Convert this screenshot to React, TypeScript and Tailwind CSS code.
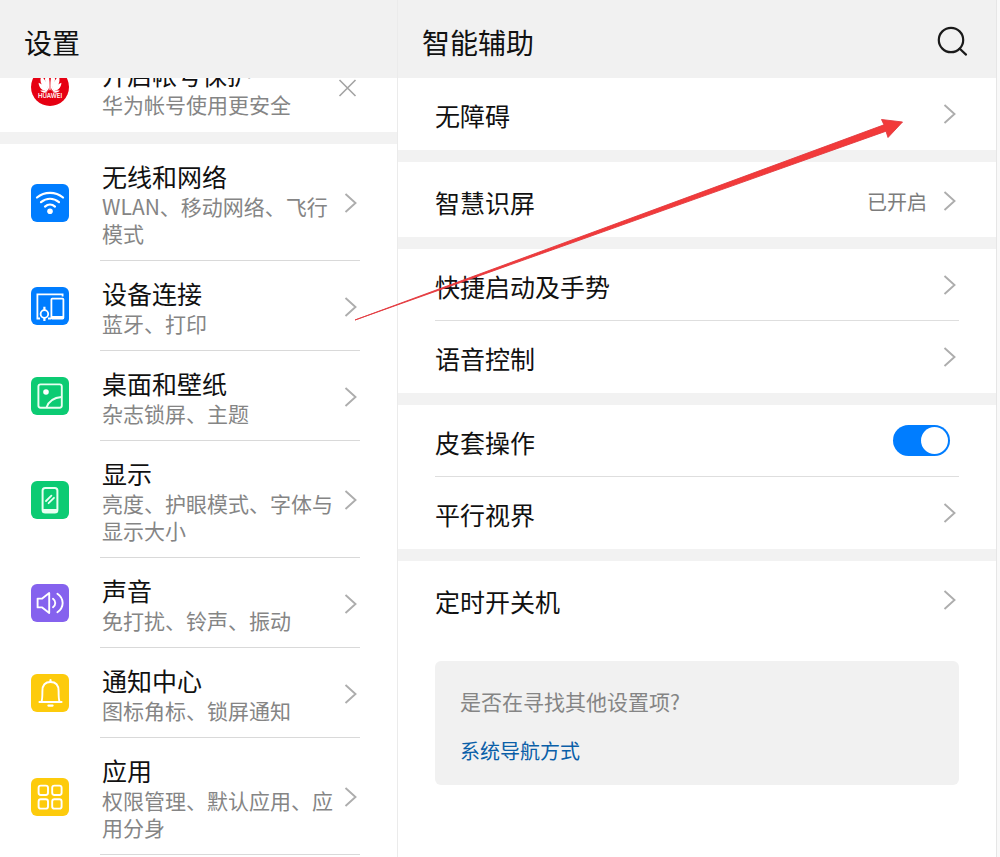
import { useState } from "react";
import type { ReactNode } from "react";

interface MenuItem {
  id: string;
  title: string;
  desc: string;
  color: string;
  icon: ReactNode;
}

// --- Icons (38x38 tiles) ---
const WifiIcon = (
  <g fill="none" stroke="#fff" strokeWidth="2.2" strokeLinecap="round">
    <path d="M6 13.5C13.5 7.2 24.5 7.2 32 13.5" />
    <path d="M10 18.2C15.5 13.6 22.5 13.6 28 18.2" />
    <path d="M14 22.6C17 20 21 20 24 22.6" />
    <circle cx="19" cy="27.2" r="2.8" fill="#fff" stroke="none" />
  </g>
);

const DevicesIcon = (
  <g fill="none" stroke="#fff" strokeWidth="1.8">
    <path d="M9 31.5H6.4V7.4H31.6V9.6" />
    <path d="M17 31.5H20" />
    <rect x="20.4" y="11.6" width="12" height="20" rx="0.8" />
    <path d="M20.4 30.6H32.4" strokeWidth="3" />
    <circle cx="13.4" cy="27" r="3.8" />
    <path d="M13.4 19.8V23M13.4 31V34" strokeWidth="2.2" />
  </g>
);

const WallpaperIcon = (
  <g fill="none" stroke="#e9fff2" strokeWidth="1.9">
    <rect x="7.4" y="7.4" width="23.4" height="23.4" rx="2.2" />
    <path d="M15.5 30.5C17.5 24.6 23 20.6 30.5 20" />
    <circle cx="15" cy="15" r="2.8" fill="#fff" stroke="none" />
  </g>
);

const DisplayIcon = (
  <g fill="none" stroke="#e9fff2" strokeWidth="2">
    <rect x="11.6" y="7" width="14.8" height="24.6" rx="2.6" />
    <path d="M11.8 29.6H26.2" strokeWidth="3.4" />
    <path d="M15 20L20.4 14.6M17.6 22.2L23 16.8" strokeWidth="1.8" strokeLinecap="round" />
  </g>
);

const SoundIcon = (
  <g fill="none" stroke="#fff" strokeWidth="1.9" strokeLinecap="round" strokeLinejoin="round">
    <path d="M6.6 14.6H11.2L18.2 9V29L11.2 23.4H6.6Z" />
    <path d="M22 14.8C25 17 25 21 22 23.2" />
    <path d="M26.4 9.8C33.4 14.6 33.4 23.4 26.4 28.2" />
  </g>
);

const BellIcon = (
  <g fill="none" stroke="#fff" strokeWidth="1.9" strokeLinecap="round" strokeLinejoin="round">
    <path d="M8.4 28H30.6" />
    <path d="M10.4 27.8C11.2 26.4 11.4 25 11.4 17C11.4 11.4 14.4 8 19.5 8C24.6 8 27.6 11.4 27.6 17C27.6 25 27.8 26.4 28.6 27.8" />
    <path d="M19.5 6.2V7.8M17.4 31.6H21.6" strokeWidth="2.2" />
  </g>
);

const AppsIcon = (
  <g fill="none" stroke="#fff" strokeWidth="1.9">
    <rect x="7.6" y="7.6" width="9.4" height="9.4" rx="2.2" />
    <rect x="21.2" y="7.6" width="9.4" height="9.4" rx="2.2" />
    <rect x="7.6" y="21.2" width="9.4" height="9.4" rx="2.2" />
    <rect x="21.2" y="21.2" width="9.4" height="9.4" rx="2.2" />
  </g>
);
// ---------------------------

const menuItems: MenuItem[] = [
  { id: "network", title: "无线和网络", desc: "WLAN、移动网络、飞行模式", color: "bg-[#007dff]", icon: WifiIcon },
  { id: "devices", title: "设备连接", desc: "蓝牙、打印", color: "bg-[#007dff]", icon: DevicesIcon },
  { id: "wallpaper", title: "桌面和壁纸", desc: "杂志锁屏、主题", color: "bg-[#0ccb73]", icon: WallpaperIcon },
  { id: "display", title: "显示", desc: "亮度、护眼模式、字体与显示大小", color: "bg-[#0ccb73]", icon: DisplayIcon },
  { id: "sound", title: "声音", desc: "免打扰、铃声、振动", color: "bg-[#8562ee]", icon: SoundIcon },
  { id: "notifications", title: "通知中心", desc: "图标角标、锁屏通知", color: "bg-[#fdcb0c]", icon: BellIcon },
  { id: "apps", title: "应用", desc: "权限管理、默认应用、应用分身", color: "bg-[#fdcb0c]", icon: AppsIcon },
];

function Chevron() {
  return (
    <svg className="h-6 w-6 shrink-0" viewBox="0 0 24 24" fill="none" stroke="#adadad" strokeWidth="1.9" aria-hidden="true">
      <path d="M9.5 3L19.5 12L9.5 21" />
    </svg>
  );
}

function HuaweiLogo() {
  return (
    <svg className="h-[38px] w-[38px] shrink-0" viewBox="0 0 38 38" role="img" aria-label="HUAWEI">
      <circle cx="19" cy="19" r="19" fill="#e60012" />
      <g fill="#fff">
        <path d="M18.5 22.4C13.6 16 12.4 9 16.6 5C18.6 9 18.9 16 18.5 22.4Z" />
        <path d="M19.5 22.4C24.4 16 25.6 9 21.4 5C19.4 9 19.1 16 19.5 22.4Z" />
        <path d="M17.4 22.8C10.6 19.4 8 13.4 10.4 8C14.2 11.6 17 16.8 17.4 22.8Z" />
        <path d="M20.6 22.8C27.4 19.4 30 13.4 27.6 8C23.8 11.6 21 16.8 20.6 22.8Z" />
        <path d="M16.6 23.3C11 23.2 7.8 19.6 7.6 14.8C12 16.4 15.4 19.4 16.6 23.3Z" />
        <path d="M21.4 23.3C27 23.2 30.2 19.6 30.4 14.8C26 16.4 22.6 19.4 21.4 23.3Z" />
        <path d="M16.6 24.1C13.6 25.4 11 24.8 9.2 22.6C12 22.4 14.6 22.9 16.6 24.1Z" />
        <path d="M21.4 24.1C24.4 25.4 27 24.8 28.8 22.6C26 22.4 23.4 22.9 21.4 24.1Z" />
      </g>
      <text x="19" y="30.4" textAnchor="middle" fontSize="6" fontWeight="600" fontFamily="Inter, sans-serif" fill="#fff">
        HUAWEI
      </text>
    </svg>
  );
}

function MenuText({ title, desc }: { title: string; desc: string }) {
  return (
    <span className="min-w-0 flex-1 pl-0.5">
      <span className="block text-[25px] leading-[34px] text-[#111]">{title}</span>
      <span className="-mr-1 block text-[21px] leading-[27px] text-[#858585]">{desc}</span>
    </span>
  );
}

function MenuRow({ item }: { item: MenuItem }) {
  return (
    <a href={`#${item.id}`} className="flex items-center gap-[31px] pl-[31px] pr-[37px]">
      <svg className={`h-[38px] w-[38px] shrink-0 rounded-md ${item.color}`} viewBox="0 0 38 38" aria-hidden="true">
        {item.icon}
      </svg>
      <span className="flex min-w-0 flex-1 items-center border-b border-[#d9d9d9] pb-[13px] pt-[15px]">
        <MenuText title={item.title} desc={item.desc} />
        <Chevron />
      </span>
    </a>
  );
}

function LinkRow({ label, value }: { label: string; value?: string }) {
  return (
    <a href={`#${label}`} className="flex min-h-[72px] items-center">
      <span className="flex-1 pt-0.5 text-[25px] leading-8 text-[#111]">{label}</span>
      {value && <span className="pr-2 pt-0.5 text-[20px] leading-7 text-[#7c7c7c]">{value}</span>}
      <Chevron />
    </a>
  );
}

function Section({ children }: { children: ReactNode }) {
  return (
    <section className="divide-y divide-[#dedede] border-b-12 border-[#f2f2f2] px-[37px]">{children}</section>
  );
}

export default function App() {
  const [coverOn, setCoverOn] = useState(true);

  return (
    <div className="relative flex min-h-screen overflow-hidden bg-white font-['Noto_Sans_CJK_SC',sans-serif]">
      {/* Settings menu */}
      <aside className="w-[39.8%] shrink-0 border-r border-[#ebebeb]">
        <header className="flex h-[78px] items-center bg-[#f1f1f1] pl-6 pt-1.5">
          <h1 className="text-[28px] leading-9 text-[#111]">设置</h1>
        </header>

        {/* Account banner, scrolled half under the header */}
        <div className="flex h-[54px] flex-col justify-end overflow-hidden">
          <div className="flex shrink-0 items-center gap-[31px] pl-[31px] pr-[37px]">
            <HuaweiLogo />
            <div className="flex min-w-0 flex-1 items-center pb-[14px] pt-[15px]">
              <MenuText title="开启帐号保护" desc="华为帐号使用更安全" />
              <button type="button" aria-label="关闭" className="shrink-0">
                <svg className="h-6 w-6" viewBox="0 0 24 24" fill="none" stroke="#a3a3a3" strokeWidth="1.6">
                  <path d="M3.5 4L19.5 20M19.5 4L3.5 20" />
                </svg>
              </button>
            </div>
          </div>
        </div>
        <div className="h-3 bg-[#f2f2f2]" />

        <nav>
          {menuItems.map((item) => (
            <MenuRow key={item.id} item={item} />
          ))}
        </nav>
      </aside>

      {/* Detail panel */}
      <main className="min-w-0 flex-1">
        <header className="flex h-[78px] items-center justify-between bg-[#f1f1f1] pl-6 pr-7 pt-1.5">
          <h2 className="text-[28px] leading-9 text-[#111]">智能辅助</h2>
          <button type="button" aria-label="搜索" className="pb-0.5">
            <svg className="h-8 w-8" viewBox="0 0 32 32" fill="none" stroke="#1a1a1a" strokeWidth="2.2" strokeLinecap="round">
              <circle cx="15" cy="15" r="12.2" />
              <path d="M23.8 23.8L30 29.6" />
            </svg>
          </button>
        </header>

        <Section>
          <LinkRow label="无障碍" />
        </Section>
        <Section>
          <div className="pt-[3px]">
            <LinkRow label="智慧识屏" value="已开启" />
          </div>
        </Section>
        <Section>
          <LinkRow label="快捷启动及手势" />
          <LinkRow label="语音控制" />
        </Section>
        <Section>
          <label className="flex min-h-[72px] items-center pr-[9px]">
            <span className="flex-1 pt-0.5 text-[25px] leading-8 text-[#111]">皮套操作</span>
            <input
              type="checkbox"
              checked={coverOn}
              onChange={(e) => setCoverOn(e.target.checked)}
              className="flex h-[31px] w-[57px] appearance-none items-center rounded-full bg-[#c4c4c4] px-0.5 before:h-[27px] before:w-[27px] before:rounded-full before:bg-white checked:justify-end checked:bg-[#007dff]"
            />
          </label>
          <LinkRow label="平行视界" />
        </Section>

        <div className="px-[37px] pt-[3px]">
          <LinkRow label="定时开关机" />
          <div className="mt-[25px] rounded-md bg-[#f1f1f1] px-[25px] pb-5 pt-[26px]">
            <p className="text-[21px] leading-7 text-[#858585]">是否在寻找其他设置项?</p>
            <a href="#navigation" className="mt-[22px] block text-[20px] leading-7 text-[#0a5fa8]">
              系统导航方式
            </a>
          </div>
        </div>
      </main>

      <div className="w-1 shrink-0 border-l border-[#e6e6e6] bg-[#f9f9f9]" />

      {/* Pointer arrow drawn over both panels */}
      <svg className="pointer-events-none absolute left-0 top-0 h-[340px] w-[1000px]" viewBox="0 0 1000 340" aria-hidden="true">
        <path
          d="M355 320L884 124.8L881.5 119.5L902.5 122L888 137.5L886 131.2Z"
          fill="#f23a3a"
          stroke="#e23a40"
          strokeWidth="0.9"
          strokeLinejoin="round"
        />
      </svg>
    </div>
  );
}
